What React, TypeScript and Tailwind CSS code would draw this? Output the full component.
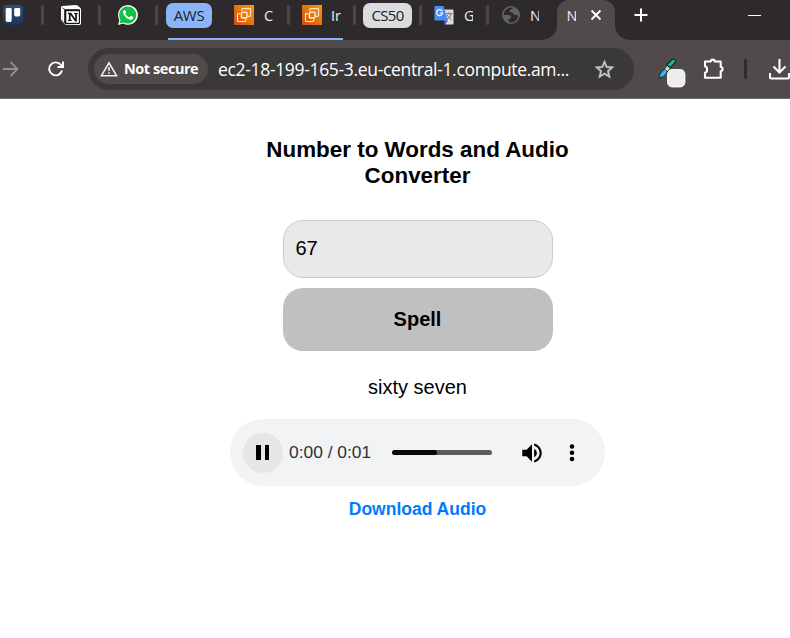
import React from "react";

const Sep = ({ className = "" }: { className?: string }) => (
  <div className={`h-5 w-[3px] shrink-0 rounded-full bg-[#4b4646] ${className}`} />
);

const Label = ({ text, className = "" }: { text: string; className?: string }) => (
  <span className={`h-6 shrink-0 overflow-hidden whitespace-nowrap text-[14.500px] leading-[25px] text-[#f1efef] ${className}`}>{text}</span>
);

const Ec2Icon = ({ className = "" }: { className?: string }) => (
  <svg viewBox="0 0 20 20" className={`size-5 shrink-0 ${className}`}>
    <defs>
      <linearGradient id="ec2" x1="0" y1="1" x2="1" y2="0">
        <stop offset="0" stopColor="#c8511b" />
        <stop offset="1" stopColor="#ff9900" />
      </linearGradient>
    </defs>
    <path fill="url(#ec2)" d="M0 0h20v20H0z" />
    <g fill="none" stroke="#fde3c4">
      <path d="M7.800 6V4.300c0-.4.200-.7.700-.7h7.200c.5 0 .8.300.8.800v6.200c0 .5-.3.800-.8.800H14" strokeWidth="1.100" />
      <path d="M6 8.600H4.300c-.5 0-.8.300-.8.800v6.300c0 .5.300.8.800.8h6.600c.5 0 .8-.3.800-.8V14" strokeWidth="1.100" />
      <rect x="7.400" y="7.300" width="5.600" height="5.600" rx="1" strokeWidth="1.600" />
    </g>
  </svg>
);

const TabStrip = () => (
  <div className="relative flex h-10 items-start bg-[#2e2a2b] pt-[3px]">
    <svg viewBox="0 0 20 20" className="mt-[2px] ml-[3px] size-5 shrink-0">
      <defs>
        <linearGradient id="board" x1="0" y1="0" x2="0" y2="1">
          <stop offset="0" stopColor="#2c5078" />
          <stop offset="1" stopColor="#1b3358" />
        </linearGradient>
      </defs>
      <rect width="20" height="20" rx="3.500" fill="url(#board)" />
      <rect x="2.700" y="3" width="6" height="14" rx="1.400" fill="#fff" />
      <rect x="11.200" y="3" width="6" height="8.500" rx="1.400" fill="#fff" />
    </svg>
    <Sep className="mt-[2px] ml-[18px]" />
    <svg viewBox="0 0 20 20" className="mt-[2px] ml-[17px] size-5 shrink-0">
      <path d="M1.200.9 14.500 0c1 0 1.700.3 2.300.8l2.400 2c.5.4.8.8.8 1.500v14c0 1-.6 1.500-1.700 1.600L5.500 20c-.9 0-1.500-.3-2-.9L.7 15.600c-.5-.6-.7-1-.7-1.700V2.200C0 1.400.4 1 1.200.9Z" fill="#fff" />
      <path d="M3.300 4.600h14.900c.5 0 .8.300.8.800v12.700c0 .5-.3.800-.8.800l-13.500.3c-.6 0-.9-.2-1.200-.6L1.200 15c-.2-.3-.2-.5-.2-.9V2.700Z" fill="#171616" />
      <path d="M1 2.500l2.800 2.300v13.700L1.200 15Z" fill="#fff" />
      <path d="M3.500 5v13M1.500 2.700l2.600 2H18.500" fill="none" stroke="#171616" strokeWidth=".8" />
      <path d="M5.300 6.200h12.500v11.600H5.300Z" fill="#fff" />
      <path d="M7 7.800h3.200l4 6V9.200l-1.200-.3v-1h3.700v1l-.8.300v7.300h-1.800l-4.500-6.400v4.600l1.300.4v1H7v-1l.9-.4V9.200L7 8.900Z" fill="#171616" />
    </svg>
    <Sep className="mt-[2px] ml-[17px]" />
    <svg viewBox="0 0 20 20" className="mt-[2px] ml-[17px] size-5 shrink-0">
      <path d="M0 20l1.400-5.100A9.900 9.900 0 1 1 5.200 18.600Z" fill="#fff" />
      <path d="M1.500 18.500l1-3.800a8.600 8.600 0 1 1 3 2.800Z" fill="#10c143" />
      <path d="M7.200 5.400c-.3-.6-.6-.5-1-.4-.8.500-1.300 1.300-1.200 2.300.2 3.400 4.700 7.300 7.700 7.400 1.100 0 2.100-.8 2.400-1.800.2-.7.100-.9-.3-1.100l-1.700-.8c-.4-.2-.6-.1-.8.200l-.7.900c-.2.300-.4.300-.8.100-1.500-.7-2.600-1.700-3.400-3.100-.2-.3-.1-.5.100-.7l.6-.8c.1-.2.200-.4.100-.6Z" fill="#fff" />
    </svg>
    <Sep className="mt-[2px] ml-[17px]" />
    <div className="ml-[8px] h-[25px] w-[46px] shrink-0 rounded-[7px] bg-[#8ab4f8] text-center text-[15px] leading-[24px] tracking-[-0.300px] text-[#202124]">AWS</div>
    <Ec2Icon className="mt-[2px] ml-[22px]" />
    <Label text="C" className="ml-[10px] w-[10px]" />
    <Sep className="mt-[2px] ml-[13px]" />
    <Ec2Icon className="mt-[2px] ml-[12px]" />
    <Label text="Ir" className="ml-[9px] w-[10px]" />
    <Sep className="mt-[2px] ml-[12px]" />
    <div className="ml-[7px] h-[25px] w-[49px] shrink-0 rounded-[7px] bg-[#dadce0] text-center text-[15px] leading-[24px] tracking-[-0.700px] text-[#202124]">CS50</div>
    <Sep className="mt-[2px] ml-[7px]" />
    <svg viewBox="0 0 20 20" className="mt-[2px] ml-[12px] size-5 shrink-0">
      <path d="M7 4.500h11.500c.6 0 1 .4 1 1v13c0 .6-.4 1-1 1H11Z" fill="#dadce0" />
      <path d="M1 1h8.500l4.300 14.500H1.500c-.6 0-1-.4-1-1V2c0-.6.400-1 .5-1Z" fill="#4c8bf5" />
      <path d="M9.500 15.500h4.300L11 19.500Z" fill="#3547c8" />
      <path d="M8.300 6.200A3 3 0 1 0 8.600 8H5.900" fill="none" stroke="#fff" strokeWidth="1.200" />
      <path d="M12 8.700h6.500M15 7.400v1.300M17 8.700c-.5 2.800-2 4.500-4 5.500M13.200 10c1 2 2.500 3.500 4.500 4.500" fill="none" stroke="#607988" strokeWidth="1" />
    </svg>
    <Label text="G" className="ml-[10px] w-[9px]" />
    <Sep className="mt-[2px] ml-[13px]" />
    <svg viewBox="0 0 18 18" className="mt-[3px] ml-[13px] size-[18px] shrink-0">
      <circle cx="9" cy="9" r="8.200" fill="#2e2a2b" stroke="#5f6368" strokeWidth="1.600" />
      <path d="M1 9c3 .1 5.500-.3 7 .5 1.500.7 1.400 2 .7 2.800-.8.800-2 .5-2.200 1.700v3A8.300 8.300 0 0 1 1 9ZM11.500 1.200C10.500 2 10.700 3 9.500 3.300 8.400 3.600 7.600 4 7.700 5.300c.1 1 1.100 1 2.300 1 .9 0 .8 1.500 1.700 2.100 1.500.9 3.600.9 5.400.5A8.200 8.200 0 0 0 11.500 1.200Z" fill="#5f6368" />
    </svg>
    <Label text="N" className="ml-[10px] w-[9px]" />
    <div className="relative -mt-[3px] ml-[18px] flex h-10 w-[58px] shrink-0 items-start rounded-t-[12px] bg-[#504a4a] pt-[3px]">
      <div className="absolute bottom-0 -left-[15px] size-[15px] bg-[#504a4a]"><div className="size-full rounded-br-[15px] bg-[#2e2a2b]" /></div>
      <div className="absolute -right-[15px] bottom-0 size-[15px] bg-[#504a4a]"><div className="size-full rounded-bl-[15px] bg-[#2e2a2b]" /></div>
      <Label text="N" className="ml-[9.500px] w-[9px]" />
      <svg viewBox="0 0 12 12" className="mt-[6px] ml-[14px] size-3 shrink-0"><path d="M1.500 1.500l9 9M10.500 1.500l-9 9" stroke="#fff" strokeWidth="1.900" /></svg>
    </div>
    <svg viewBox="0 0 14 14" className="mt-[5px] ml-[18.500px] size-[14px] shrink-0"><path d="M7 .5v13M.5 7h13" stroke="#fff" strokeWidth="2" /></svg>
    <div className="mt-[12px] ml-[100px] h-px w-[13px] shrink-0 bg-white" />
    <div className="absolute bottom-0 left-[168px] h-[2px] w-[175px] bg-[#8ab4f8]" />
  </div>
);

const Toolbar = () => (
  <div className="flex h-[59px] items-center border-b border-[#6c6666] bg-[#504a4a]">
    <svg viewBox="0 0 16 16" className="ml-[2.500px] size-4 shrink-0" fill="none" stroke="#938f8f" strokeWidth="1.800"><path d="M0 8h14M7.500 1l7 7-7 7" /></svg>
    <svg viewBox="0 0 16 16" className="ml-[29px] size-4 shrink-0"><path d="M14 9.500A6.500 6.500 0 1 1 12.700 3.700L14.500 5.500M15 .5V6H9.500" fill="none" stroke="#fff" strokeWidth="1.900" /></svg>
    <div className="ml-[24.500px] flex h-[42px] w-[546px] shrink-0 items-center rounded-full bg-[#3b3838]">
      <div className="ml-[6px] flex h-[30px] w-[114px] shrink-0 items-center rounded-full bg-[#504a4a]">
        <svg viewBox="0 0 18 16" className="ml-[6px] h-4 w-[18px] shrink-0"><path d="M9 1.900 16.500 14.700h-15Z" fill="none" stroke="#f2f0f0" strokeWidth="1.600" /><path d="M9 6v4M9 11.200v1.800" stroke="#f2f0f0" strokeWidth="1.500" /></svg>
        <span className="-mt-px ml-[6px] whitespace-nowrap text-[14.500px] font-bold tracking-[-0.450px] text-white">Not secure</span>
      </div>
      <span className="ml-[10px] w-[360px] shrink-0 whitespace-nowrap text-[17.500px] tracking-[-0.330px] text-white">ec2-18-199-165-3.eu-central-1.compute.am...</span>
      <svg viewBox="0 0 24 24" className="ml-[15px] size-[23px] shrink-0" fill="#c9c7c7" stroke="#c9c7c7" strokeWidth=".4"><path d="m22 9.240-7.190-.62L12 2 9.190 8.630 2 9.240l5.460 4.730L5.820 21 12 17.270 18.180 21l-1.630-7.030L22 9.240zM12 15.400l-3.760 2.270 1-4.280-3.320-2.880 4.380-.38L12 6.100l1.710 4.040 4.380.38-3.320 2.880 1 4.280L12 15.400z" /></svg>
    </div>
    <svg viewBox="0 0 28 30" className="mt-[8px] ml-[24px] h-[30px] w-7 shrink-0">
      <path d="M1.300 20.500c.2-3 .5-5 2.500-7l3-2.500 2.500 2c-1 2.500-2 4.500-4 5.500Z" fill="#2bbcf2" stroke="#182431" strokeWidth="1" />
      <path d="M7 11l3-3.500 2.500 2.200L9.300 13Z" fill="#d9d9dc" />
      <path d="M8.700 6.500l2-1.500L14 1.500c2-1 4 .5 3.500 2.500L13.500 8l-1.200 2Z" fill="#17bd87" stroke="#172c2a" strokeWidth="1.200" />
      <rect x="9.600" y="11.600" width="17.300" height="17.300" rx="4.500" fill="#ededed" stroke="#fff" />
    </svg>
    <svg viewBox="0 0 22 22" className="-mt-px ml-[17px] size-[22px] shrink-0"><path d="M2 3.500h5.800c0-2.500 3.900-2.500 3.900 0h6V9c2.500.2 2.500 4 0 4.200v6.500H2v-4.900c2.800-.5 2.800-6 0-6.500Z" fill="none" stroke="#fff" strokeWidth="2.100" strokeLinejoin="round" /></svg>
    <div className="ml-[19px] h-5 w-[3px] shrink-0 rounded-full bg-[#302c2c]" />
    <svg viewBox="0 0 21 21" className="ml-[22px] size-[21px] shrink-0"><path d="M10.500 0v13M4.500 7.500l6 6 6-6M1 14v4c0 1 .5 1.500 1.500 1.500h16c1 0 1.500-.5 1.500-1.500v-4" fill="none" stroke="#fff" strokeWidth="2.100" /></svg>
  </div>
);

const Player = () => (
  <div className="mt-[19px] flex h-[67px] w-[375px] items-center rounded-full bg-[#f1f3f4]">
    <div className="ml-[13px] flex size-10 items-center justify-center gap-[4px] rounded-full bg-[#e4e6e7] pr-px">
      <div className="h-[15px] w-[4.500px] bg-black" />
      <div className="h-[15px] w-[4.500px] bg-black" />
    </div>
    <span className="ml-[6px] w-[103px] whitespace-nowrap text-[17.400px] text-[#303132]">0:00 / 0:01</span>
    <div className="h-[5px] w-[100px] overflow-hidden rounded-full bg-[#5b5c5c]"><div className="h-full w-[45px] rounded-full bg-[#080808]" /></div>
    <svg viewBox="0 0 24 24" className="ml-[27px] size-[26px] shrink-0"><path d="M3 9v6h4l5 5V4L7 9H3zm13.500 3A4.500 4.500 0 0 0 14 7.970v8.050c1.480-.73 2.500-2.250 2.500-4.020zM14 3.230v2.060c2.890.86 5 3.540 5 6.710s-2.110 5.850-5 6.710v2.060c4.010-.91 7-4.490 7-8.770s-2.990-7.860-7-8.770z" /></svg>
    <svg viewBox="0 0 6 20" className="ml-[23.500px] h-5 w-[6px]"><circle cx="3" cy="3.500" r="2.300" /><circle cx="3" cy="9.800" r="2.300" /><circle cx="3" cy="16" r="2.300" /></svg>
  </div>
);

export default function App() {
  return (
    <div className="h-[638px] w-[790px] overflow-hidden bg-white font-['Open_Sans',sans-serif]">
      <TabStrip />
      <Toolbar />
      <main className="ml-[230px] flex w-[375px] flex-col items-center pt-[38px] font-['Liberation_Sans',Arial,sans-serif] text-black">
        <h1 className="w-[320px] text-center text-[22.400px] leading-[26px] font-bold">Number to Words and Audio Converter</h1>
        <input type="text" defaultValue="67" className="mt-[31px] h-[58px] w-[270px] rounded-[20px] border border-[#ccc] bg-[#e9e9e9] px-3 pb-px text-[20px] outline-none" />
        <button className="mt-[10px] h-[63px] w-[270px] rounded-[20px] bg-[#c0c0c0] pb-[2px] text-[20px] font-bold">Spell</button>
        <p className="mt-6 text-[20px] leading-[25px]">sixty seven</p>
        <Player />
        <a className="mt-3 text-[17.500px] leading-[22px] font-bold text-[#007bff]">Download Audio</a>
      </main>
    </div>
  );
}
